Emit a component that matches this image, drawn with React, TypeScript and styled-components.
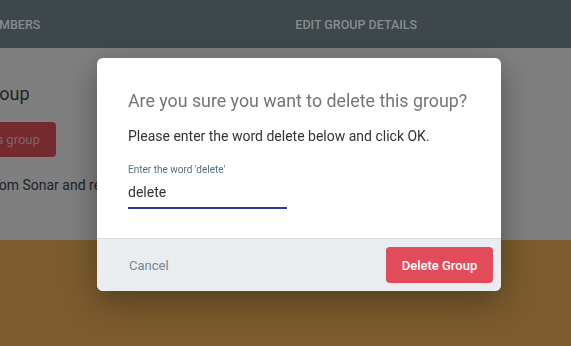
import styled, { createGlobalStyle } from 'styled-components';

const GlobalStyle = createGlobalStyle`
  html, body {
    margin: 0;
    padding: 0;
    width: 571px;
    height: 346px;
    overflow: hidden;
    background: #fefefe;
    font-family: Roboto, "Liberation Sans", Arial, sans-serif;
  }
`;

const Page = styled.div`
  width: 571px;
  height: 346px;
  display: flex;
  flex-direction: column;
  overflow: hidden;
`;

const Header = styled.header`
  height: 48px;
  flex: none;
  background: #3e474c;
  display: flex;
  align-items: center;
  gap: 255px;
  position: relative;
  z-index: 3;
`;

const Tab = styled.div<{ offset?: number }>`
  margin-left: ${({ offset }) => offset ?? 0}px;
  font-size: 12.5px;
  font-weight: 500;
  color: #888c8f;
  text-transform: uppercase;
  white-space: nowrap;
`;

const Main = styled.main`
  flex: 1;
  display: flex;
  flex-direction: column;
  background: #fefefe;
  position: relative;
`;

const Section = styled.section`
  height: 192px;
  flex: none;
  box-sizing: border-box;
  padding: 35px 0 0;
  margin-left: -76px;
  display: flex;
  flex-direction: column;
  align-items: flex-start;
`;

const SectionTitle = styled.h2`
  margin: 0 0 18px 4px;
  font-size: 18px;
  font-weight: 400;
  color: #3b4a55;
  white-space: nowrap;
`;

const DangerButton = styled.button`
  height: 35px;
  margin-left: 2px;
  padding: 0 16px;
  border: none;
  border-radius: 4px;
  background: #ea545c;
  color: rgba(255, 255, 255, 0.72);
  font-family: inherit;
  font-size: 13px;
  white-space: nowrap;
`;

const SectionText = styled.p`
  margin: 20px 0 0;
  font-size: 14px;
  color: #3b4a55;
  white-space: nowrap;
`;

const Band = styled.div`
  flex: 1;
  background: #f8b85c;
`;

const Backdrop = styled.div`
  position: absolute;
  inset: 0;
  background: rgba(0, 0, 0, 0.5);
  z-index: 1;
`;

const Dialog = styled.div`
  position: fixed;
  left: 97px;
  top: 58px;
  width: 404px;
  border-radius: 6px;
  overflow: hidden;
  background: #fff;
  box-shadow: 0 10px 32px rgba(0, 0, 0, 0.35);
  z-index: 4;
  display: flex;
  flex-direction: column;
`;

const DialogBody = styled.div`
  height: 181px;
  box-sizing: border-box;
  padding: 31px 31px 0;
  border-bottom: 1px solid #dadde0;
`;

const DialogTitle = styled.h3`
  margin: 0;
  font-size: 17.8px;
  line-height: 24px;
  font-weight: 400;
  color: #757575;
  white-space: nowrap;
`;

const DialogText = styled.p`
  margin: 14px 0 0;
  font-size: 14px;
  line-height: 18px;
  color: #333;
`;

const Field = styled.label`
  display: flex;
  flex-direction: column;
  margin-top: 18px;
  width: 159px;
`;

const FieldLabel = styled.span`
  font-size: 10px;
  line-height: 14px;
  color: #557080;
`;

const FieldInput = styled.input`
  margin-top: 6px;
  padding: 0 0 6px;
  border: none;
  border-bottom: 2px solid #2a3a9c;
  outline: none;
  font-family: inherit;
  font-size: 14px;
  line-height: 18px;
  color: #333;
  background: transparent;
  caret-color: #333;
`;

const DialogFooter = styled.div`
  height: 52px;
  background: #e9edf0;
  display: flex;
  align-items: center;
  justify-content: space-between;
  padding: 0 8px 0 32px;
`;

const CancelButton = styled.button`
  padding: 0;
  border: none;
  background: transparent;
  font-family: inherit;
  font-size: 13px;
  color: #728793;
`;

const ConfirmButton = styled.button`
  width: 107px;
  height: 36px;
  border: none;
  border-radius: 4px;
  background: #e24c5a;
  color: #fff;
  font-family: inherit;
  font-size: 13px;
  font-weight: 500;
`;

const App = () => (
  <>
    <GlobalStyle />
    <Page>
      <Header>
        <Tab offset={-19}>Members</Tab>
        <Tab>Edit Group Details</Tab>
      </Header>
      <Main>
        <Section>
          <SectionTitle>Delete group</SectionTitle>
          <DangerButton>Delete this group</DangerButton>
          <SectionText>Remove it from Sonar and remove all of its members.</SectionText>
        </Section>
        <Band />
        <Backdrop />
      </Main>
    </Page>
    <Dialog>
      <DialogBody>
        <DialogTitle>Are you sure you want to delete this group?</DialogTitle>
        <DialogText>Please enter the word delete below and click OK.</DialogText>
        <Field>
          <FieldLabel>Enter the word 'delete'</FieldLabel>
          <FieldInput autoFocus defaultValue="delete" />
        </Field>
      </DialogBody>
      <DialogFooter>
        <CancelButton>Cancel</CancelButton>
        <ConfirmButton>Delete Group</ConfirmButton>
      </DialogFooter>
    </Dialog>
  </>
);

export default App;
